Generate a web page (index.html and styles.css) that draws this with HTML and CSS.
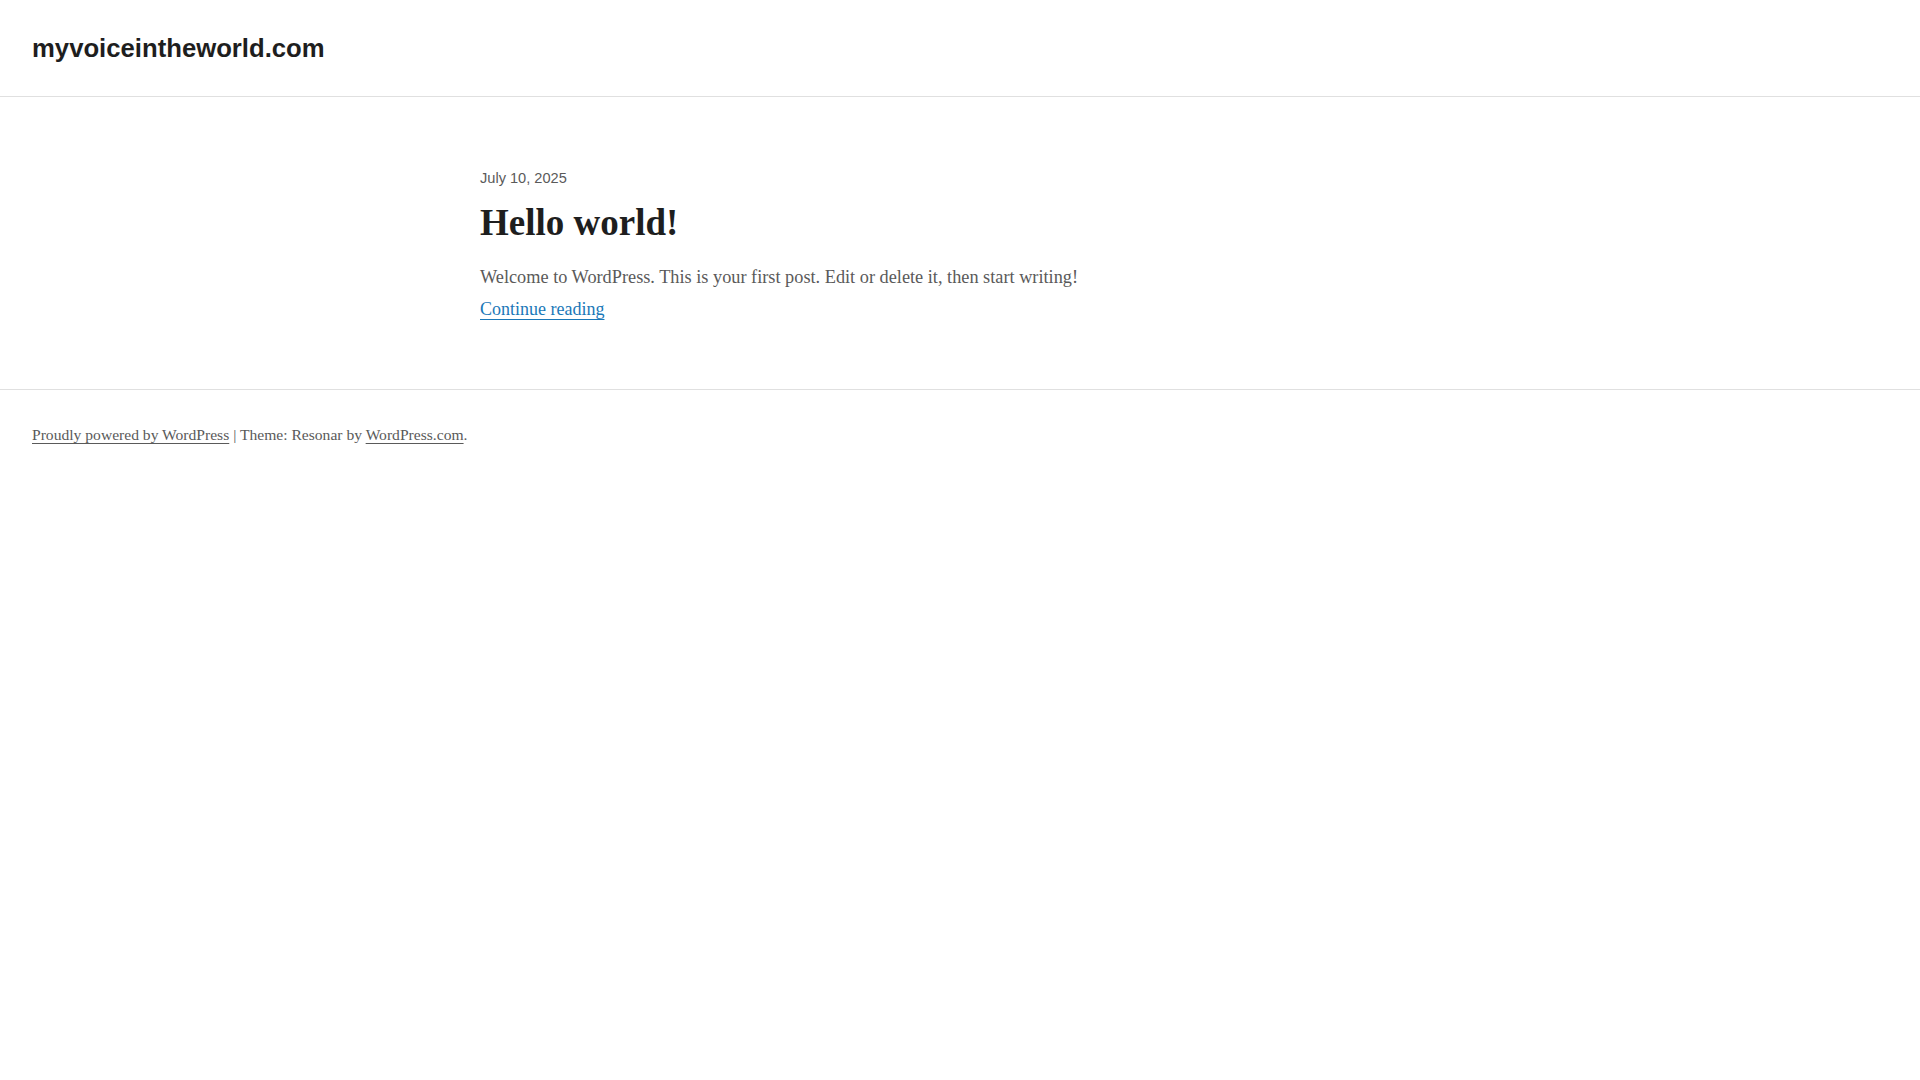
FILE: index.html
```html
<!DOCTYPE html>
<html lang="en">
<head>
<meta charset="utf-8">
<title>myvoiceintheworld.com</title>
<link rel="stylesheet" href="styles.css">
</head>
<body>
<header class="site-header">
  <a class="site-title" href="#">myvoiceintheworld.com</a>
</header>
<main class="site-main">
  <article class="post">
    <div class="post-date">July 10, 2025</div>
    <h2 class="post-title">Hello world!</h2>
    <p class="post-excerpt">Welcome to WordPress. This is your first post. Edit or delete it, then start writing!</p>
    <p class="post-more"><a href="#">Continue reading</a></p>
  </article>
</main>
<footer class="site-footer">
  <p class="site-info"><a href="#">Proudly powered by WordPress</a> | Theme: Resonar by <a href="#">WordPress.com</a>.</p>
</footer>
</body>
</html>
```

FILE: styles.css
```css
html, body {
  margin: 0;
  padding: 0;
  background: #ffffff;
}

body {
  font-family: "Liberation Serif", "Times New Roman", serif;
  color: #5a5a5a;
}

.site-header {
  height: 96px;
  display: flex;
  align-items: center;
  padding: 0 32px;
  border-bottom: 1px solid #e0e0e0;
}

.site-title {
  font-family: "Liberation Sans", Arial, sans-serif;
  font-weight: 700;
  font-size: 25.7px;
  line-height: 1.2;
  color: #1e1e1e;
  text-decoration: none;
}

.site-main {
  padding: 71px 0 64px;
}

.post {
  max-width: 960px;
  margin: 0 auto;
}

.post-date {
  font-family: "Liberation Sans", Arial, sans-serif;
  font-size: 14.6px;
  line-height: 20px;
  color: #5a5a5a;
}

.post-title {
  margin: 13px 0 0;
  font-family: "Liberation Serif", "Times New Roman", serif;
  font-weight: 700;
  font-size: 37px;
  line-height: 44.4px;
  color: #1e1e1e;
}

.post-excerpt {
  margin: 17px 0 0;
  font-size: 18.3px;
  line-height: 31px;
  color: #5a5a5a;
}

.post-more {
  margin: 1px 0 0;
  font-size: 18px;
  line-height: 31px;
}

.post-more a {
  color: #1a78b8;
  text-decoration: underline;
  text-underline-offset: 4px;
}

.site-footer {
  border-top: 1px solid #e0e0e0;
  padding: 33px 32px 0;
}

.site-info {
  margin: 0;
  font-size: 15.6px;
  line-height: 24px;
  color: #5a5a5a;
}

.site-info a {
  color: #5a5a5a;
  text-decoration: underline;
  text-underline-offset: 3px;
}
```
